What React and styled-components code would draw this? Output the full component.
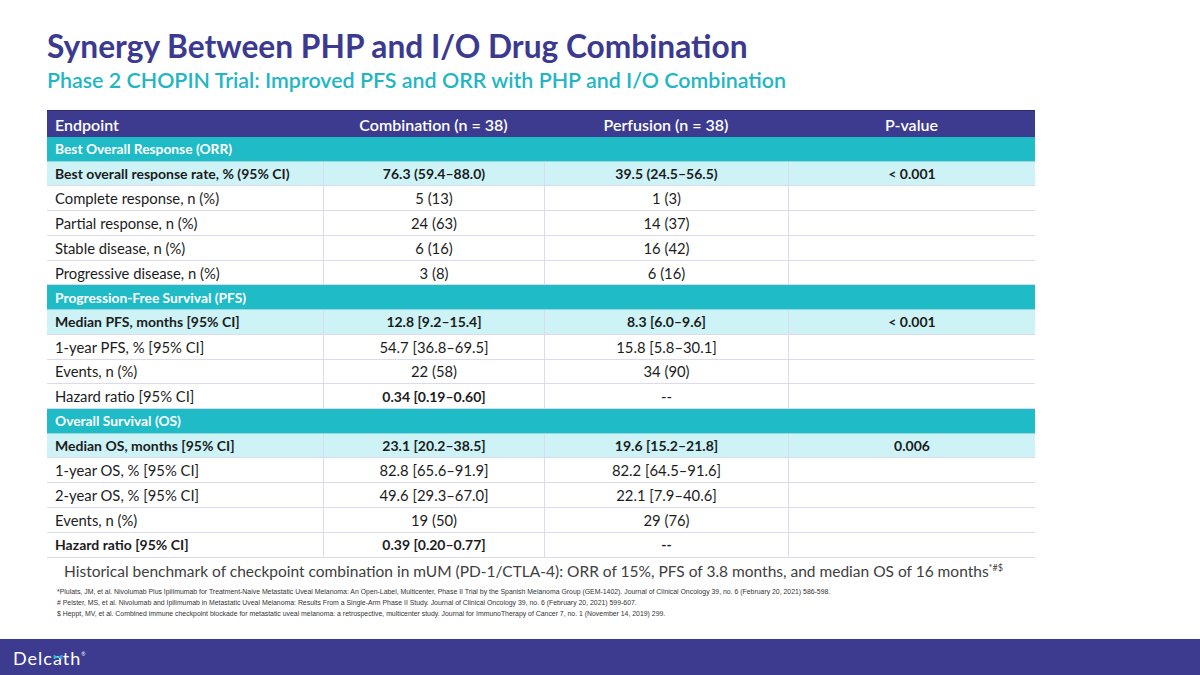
import styled, { createGlobalStyle } from 'styled-components'

const GlobalStyle = createGlobalStyle`
  html, body {
    margin: 0;
    padding: 0;
    background: #ffffff;
  }
  body {
    font-family: Lato, "Open Sans", sans-serif;
  }
`

const sections = [
  {
    title: 'Best Overall Response (ORR)',
    rows: [
      { label: 'Best overall response rate, % (95% CI)', combo: '76.3 (59.4–88.0)', perf: '39.5 (24.5–56.5)', p: '< 0.001', key: true },
      { label: 'Complete response, n (%)', combo: '5 (13)', perf: '1 (3)' },
      { label: 'Partial response, n (%)', combo: '24 (63)', perf: '14 (37)' },
      { label: 'Stable disease, n (%)', combo: '6 (16)', perf: '16 (42)' },
      { label: 'Progressive disease, n (%)', combo: '3 (8)', perf: '6 (16)' },
    ],
  },
  {
    title: 'Progression-Free Survival (PFS)',
    rows: [
      { label: 'Median PFS, months [95% CI]', combo: '12.8 [9.2–15.4]', perf: '8.3 [6.0–9.6]', p: '< 0.001', key: true },
      { label: '1-year PFS, % [95% CI]', combo: '54.7 [36.8–69.5]', perf: '15.8 [5.8–30.1]' },
      { label: 'Events, n (%)', combo: '22 (58)', perf: '34 (90)' },
      { label: 'Hazard ratio [95% CI]', combo: '0.34 [0.19–0.60]', perf: '--', comboBold: true },
    ],
  },
  {
    title: 'Overall Survival (OS)',
    rows: [
      { label: 'Median OS, months [95% CI]', combo: '23.1 [20.2–38.5]', perf: '19.6 [15.2–21.8]', p: '0.006', key: true },
      { label: '1-year OS, % [95% CI]', combo: '82.8 [65.6–91.9]', perf: '82.2 [64.5–91.6]' },
      { label: '2-year OS, % [95% CI]', combo: '49.6 [29.3–67.0]', perf: '22.1 [7.9–40.6]' },
      { label: 'Events, n (%)', combo: '19 (50)', perf: '29 (76)' },
      { label: 'Hazard ratio [95% CI]', combo: '0.39 [0.20–0.77]', perf: '--', bold: true },
    ],
  },
]

const refs = [
  '*Piulats, JM, et al. Nivolumab Plus Ipilimumab for Treatment-Naive Metastatic Uveal Melanoma: An Open-Label, Multicenter, Phase II Trial by the Spanish Melanoma Group (GEM-1402). Journal of Clinical Oncology 39, no. 6 (February 20, 2021) 586-598.',
  '# Pelster, MS, et al. Nivolumab and Ipilimumab in Metastatic Uveal Melanoma: Results From a Single-Arm Phase II Study. Journal of Clinical Oncology 39, no. 6 (February 20, 2021) 599-607.',
  '$ Heppt, MV, et al. Combined immune checkpoint blockade for metastatic uveal melanoma: a retrospective, multicenter study. Journal for ImmunoTherapy of Cancer 7, no. 1 (November 14, 2019) 299.',
]

const App = () => {
  return (
    <Slide>
      <GlobalStyle />
      <Main>
        <Title>Synergy Between PHP and I/O Drug Combination</Title>
        <Subtitle>Phase 2 CHOPIN Trial: Improved PFS and ORR with PHP and I/O Combination</Subtitle>
        <Table>
          <HeadRow>
            <HeadCell>Endpoint</HeadCell>
            <HeadCell center>Combination (n = 38)</HeadCell>
            <HeadCell center>Perfusion (n = 38)</HeadCell>
            <HeadCell center>P-value</HeadCell>
          </HeadRow>
          {sections.map((s) => (
            <div key={s.title}>
              <SectionRow>{s.title}</SectionRow>
              {s.rows.map((r) => (
                <Row key={r.label} highlight={r.key}>
                  <Cell bold={r.key || r.bold}>{r.label}</Cell>
                  <Cell center bold={r.key || r.bold || r.comboBold}>{r.combo}</Cell>
                  <Cell center bold={r.key || r.bold}>{r.perf}</Cell>
                  <Cell center bold={r.key}>{r.p || ''}</Cell>
                </Row>
              ))}
            </div>
          ))}
        </Table>
        <Benchmark>
          Historical benchmark of checkpoint combination in mUM (PD-1/CTLA-4): ORR of 15%, PFS of 3.8 months, and median OS of 16 months<sup>*#$</sup>
        </Benchmark>
        <Refs>
          {refs.map((r) => (
            <li key={r}>{r}</li>
          ))}
        </Refs>
      </Main>
      <Footer>
        <Logo>
          Delcath<Reg>®</Reg>
          <Bow viewBox='0 0 14 8'>
            <path d='M1 1 L6.3 3.3 Q7 3.6 7.7 3.3 L13 1 L13 7 L7.7 4.7 Q7 4.4 6.3 4.7 L1 7 Z' fill='#2cc4c6' />
            <path d='M7.7 3.3 L13 1 L13 7 L7.7 4.7 Z' fill='#4c8fdc' />
          </Bow>
        </Logo>
      </Footer>
    </Slide>
  )
}

export default App

const Slide = styled.div`
  width: 1200px;
  height: 675px;
  display: flex;
  flex-direction: column;
  overflow: hidden;
  background: #fff;
`

const Main = styled.div`
  flex: 1;
  padding: 27px 0 0 47px;
`

const Title = styled.h1`
  margin: 0;
  font-family: Lato, sans-serif;
  font-weight: 700;
  font-size: 31.7px;
  line-height: 38px;
  color: #3b3990;
`

const Subtitle = styled.h2`
  margin: 2px 0 0;
  font-family: Lato, sans-serif;
  font-weight: 600;
  font-size: 21.4px;
  line-height: 26px;
  color: #22b6c3;
`

const Table = styled.div`
  margin-top: 17px;
  width: 988px;
  border-top: 1px solid #2a286e;
`

const HeadRow = styled.div`
  display: grid;
  grid-template-columns: 276px 221px 244px 247px;
  height: 26px;
  background: #3d3b8f;
  align-items: center;
`

const HeadCell = styled.div`
  padding: 0 8px;
  color: #fff;
  font-size: 16px;
  font-weight: 600;
  text-align: ${(p) => (p.center ? 'center' : 'left')};
`

const SectionRow = styled.div`
  height: 24.5px;
  display: flex;
  align-items: center;
  padding: 0 8px;
  background: #1fbbc6;
  color: #fff;
  font-size: 13.8px;
  font-weight: 700;
  border-bottom: 1px solid #8fd9df;
  box-sizing: border-box;
`

const Row = styled.div`
  display: grid;
  grid-template-columns: 276px 221px 244px 247px;
  height: 24.8px;
  box-sizing: border-box;
  background: ${(p) => (p.highlight ? '#cdf3f7' : '#ffffff')};
  border-bottom: 1.5px solid #dcdaf0;
`

const Cell = styled.div`
  display: flex;
  align-items: center;
  justify-content: ${(p) => (p.center ? 'center' : 'flex-start')};
  padding: 0 8px;
  font-size: ${(p) => (p.bold ? '14px' : '14.8px')};
  font-weight: ${(p) => (p.bold ? 700 : 400)};
  color: #1c1c1c;
  & + & {
    border-left: 1.5px solid #dcdaf0;
  }
`

const Benchmark = styled.p`
  margin: 3px 0 0 17px;
  font-size: 15.5px;
  line-height: 20px;
  color: #404040;
  & sup {
    font-size: 9px;
    vertical-align: 6px;
    line-height: 0;
  }
`

const Refs = styled.ul`
  list-style: none;
  margin: 5px 0 0 10px;
  padding: 0;
  & li {
    font-family: "Liberation Sans Narrow", "Liberation Sans", sans-serif;
    font-size: 6.9px;
    line-height: 11px;
    color: #333;
    white-space: nowrap;
  }
`

const Footer = styled.div`
  height: 36px;
  background: #3d3b8f;
  display: flex;
  align-items: center;
  padding-left: 13px;
`

const Logo = styled.div`
  position: relative;
  font-family: Lato, sans-serif;
  font-size: 18px;
  font-weight: 400;
  color: #fff;
  letter-spacing: 1px;
  line-height: 22px;
  margin-top: -3px;
`

const Bow = styled.svg`
  position: absolute;
  width: 10px;
  height: 6px;
  left: 40px;
  top: 11px;
`

const Reg = styled.span`
  font-size: 5px;
  vertical-align: 9px;
  margin-left: 0;
`
